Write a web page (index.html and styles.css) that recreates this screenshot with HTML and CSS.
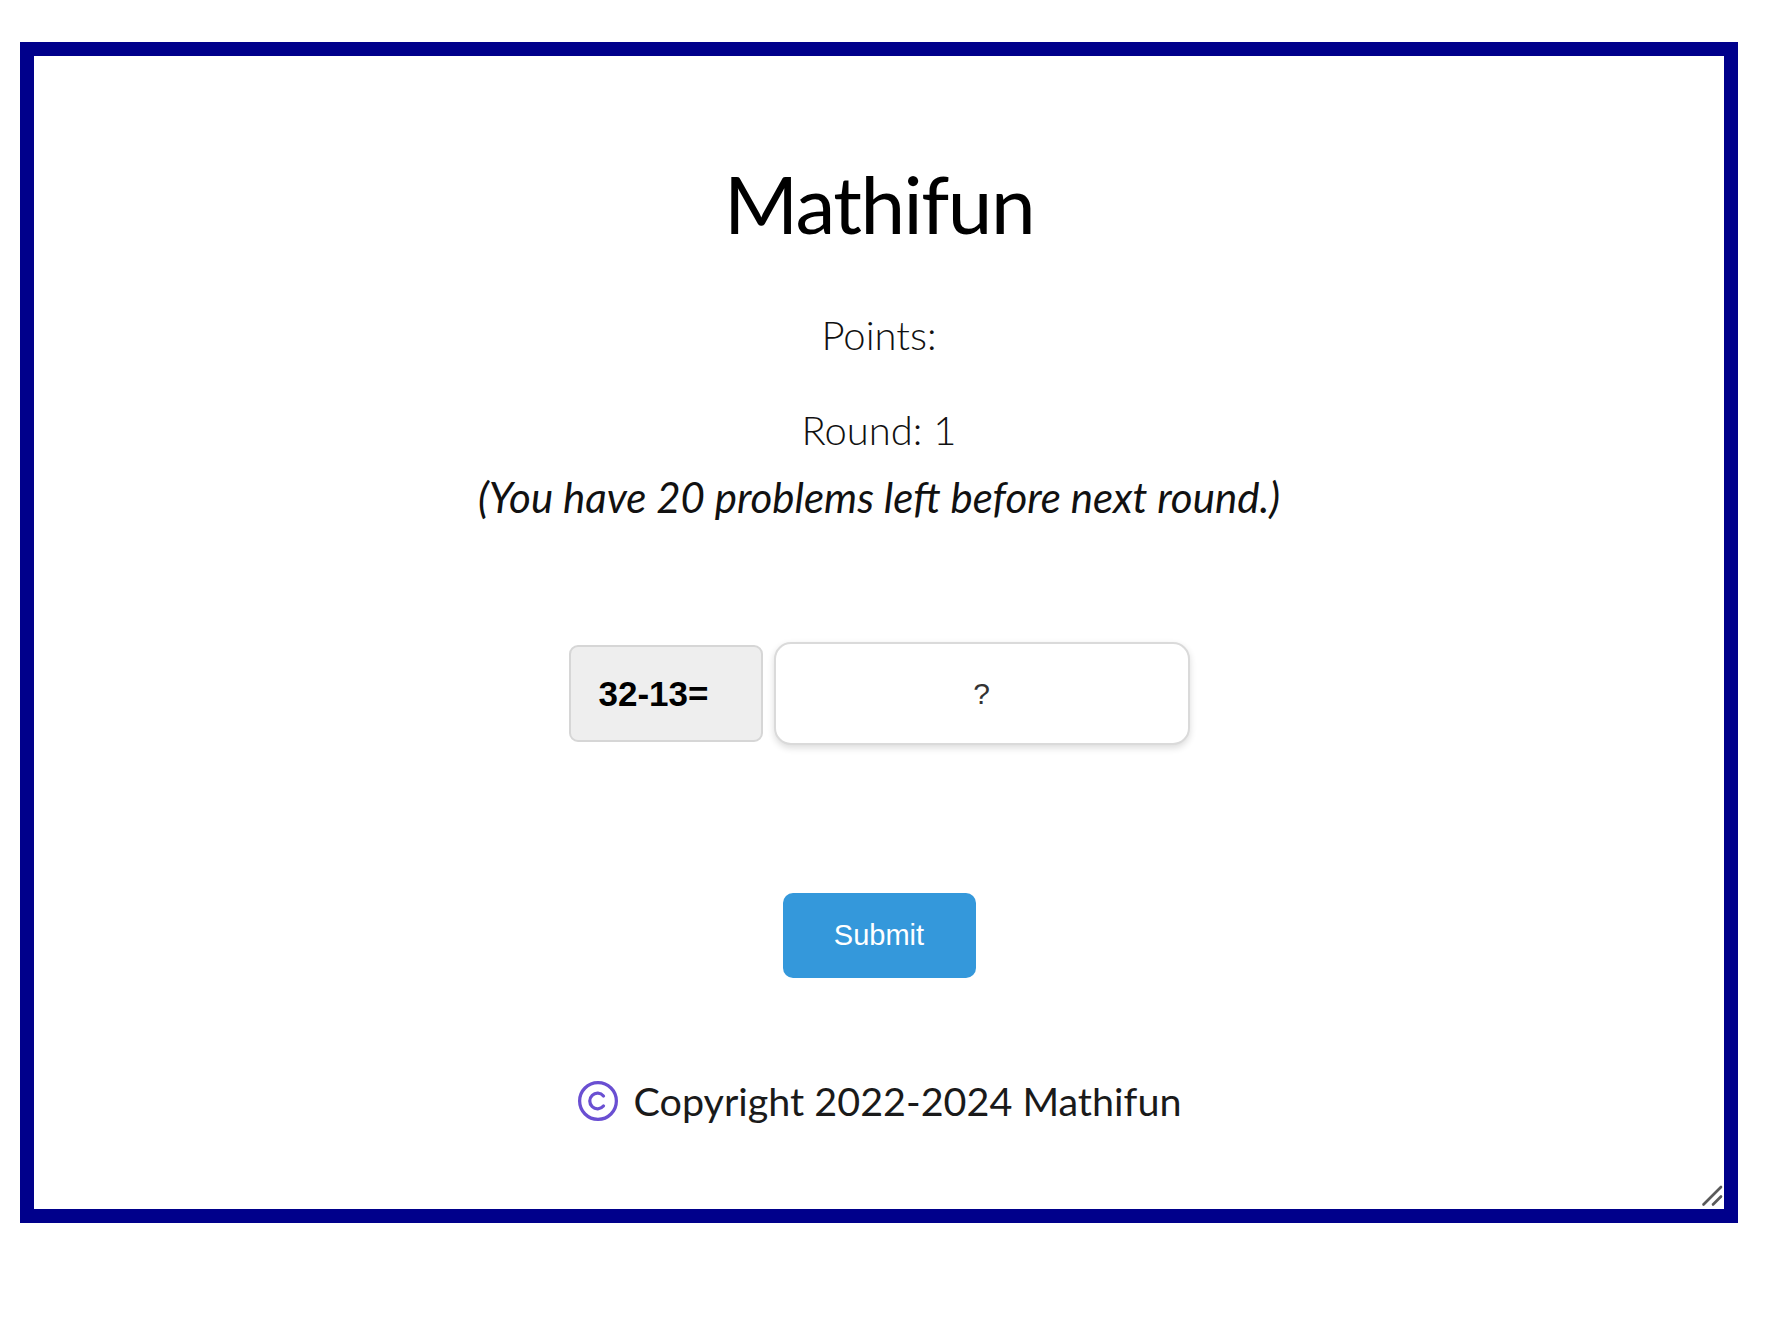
FILE: index.html
```html
<!DOCTYPE html>
<html lang="en">
<head>
<meta charset="utf-8">
<title>Mathifun</title>
<link rel="stylesheet" href="styles.css">
</head>
<body>
<div class="frame">
  <h1 class="title">Mathifun</h1>
  <p class="points">Points:</p>
  <p class="round">Round: 1</p>
  <p class="left">(You have 20 problems left before next round.)</p>
  <div class="problem">
    <div class="equation">32-13=</div>
    <input class="answer" type="text" placeholder="?">
  </div>
  <button class="submit" type="button">Submit</button>
  <footer class="copyright">
    <svg class="copy-icon" width="42" height="42" viewBox="0 0 40 40" aria-hidden="true">
      <circle cx="20" cy="20" r="17.5" fill="none" stroke="#6a4fd2" stroke-width="3.1"/>
      <path d="M25.2 15.2 A7.4 7.4 0 1 0 25.2 24.8" fill="none" stroke="#6a4fd2" stroke-width="3.1" stroke-linecap="round"/>
    </svg>
    <span>Copyright 2022-2024 Mathifun</span>
  </footer>
  <svg class="grip" width="22" height="22" viewBox="0 0 22 22" aria-hidden="true">
    <path d="M2.5 19.5 L20 2" fill="none" stroke="#5a5a5a" stroke-width="2.6" stroke-linecap="round"/>
    <path d="M12 19.5 L20 11.5" fill="none" stroke="#5a5a5a" stroke-width="2.6" stroke-linecap="round"/>
  </svg>
</div>
</body>
</html>
```

FILE: styles.css
```css
html, body {
  margin: 0;
  padding: 0;
  background: #ffffff;
}

.frame {
  position: relative;
  box-sizing: content-box;
  margin: 42px 0 0 20px;
  width: 1690px;
  height: 1153px;
  border: 14px solid #00008b;
  display: flex;
  flex-direction: column;
  align-items: center;
  font-family: Lato, "Open Sans", sans-serif;
  color: #111111;
}

.title {
  margin: 99px 0 0;
  font-size: 80px;
  line-height: 1.2;
  font-weight: 400;
  letter-spacing: -1.5px;
  color: #000000;
}

.points,
.round,
.left {
  margin: 0;
  font-size: 40px;
  line-height: 1.2;
  font-weight: 300;
}

.points {
  margin-top: 60px;
}

.round {
  margin-top: 47px;
}

.left {
  margin-top: 18px;
  font-size: 42px;
  font-style: italic;
  font-weight: 400;
}

.problem {
  margin-top: 120px;
  display: flex;
  align-items: center;
  gap: 11px;
}

.equation {
  box-sizing: border-box;
  width: 194px;
  height: 97px;
  padding-left: 28px;
  display: flex;
  align-items: center;
  background: #eeeeee;
  border: 2px solid #d6d6d6;
  border-radius: 9px;
  font-family: "Liberation Sans", Arial, sans-serif;
  font-weight: 700;
  font-size: 35px;
  color: #000000;
}

.answer {
  box-sizing: border-box;
  width: 416px;
  height: 103px;
  border: 2px solid #dadada;
  border-radius: 17px;
  box-shadow: 0 3px 7px rgba(0, 0, 0, 0.14);
  background: #ffffff;
  text-align: center;
  font-family: "Liberation Sans", Arial, sans-serif;
  font-size: 30px;
  color: #222222;
  outline: none;
}

.answer::placeholder {
  color: #333333;
}

.submit {
  margin-top: 148px;
  width: 193px;
  height: 85px;
  border: none;
  border-radius: 10px;
  background: #3498db;
  color: #ffffff;
  font-family: "Liberation Sans", Arial, sans-serif;
  font-size: 29px;
  cursor: pointer;
}

.copyright {
  margin-top: 99px;
  display: flex;
  align-items: center;
  gap: 15px;
  font-size: 39.5px;
  line-height: 1.2;
  font-weight: 400;
  color: #1a1a1a;
}

.copy-icon {
  display: block;
  flex: none;
}

.grip {
  position: absolute;
  right: 1px;
  bottom: 2px;
  display: block;
}
```
